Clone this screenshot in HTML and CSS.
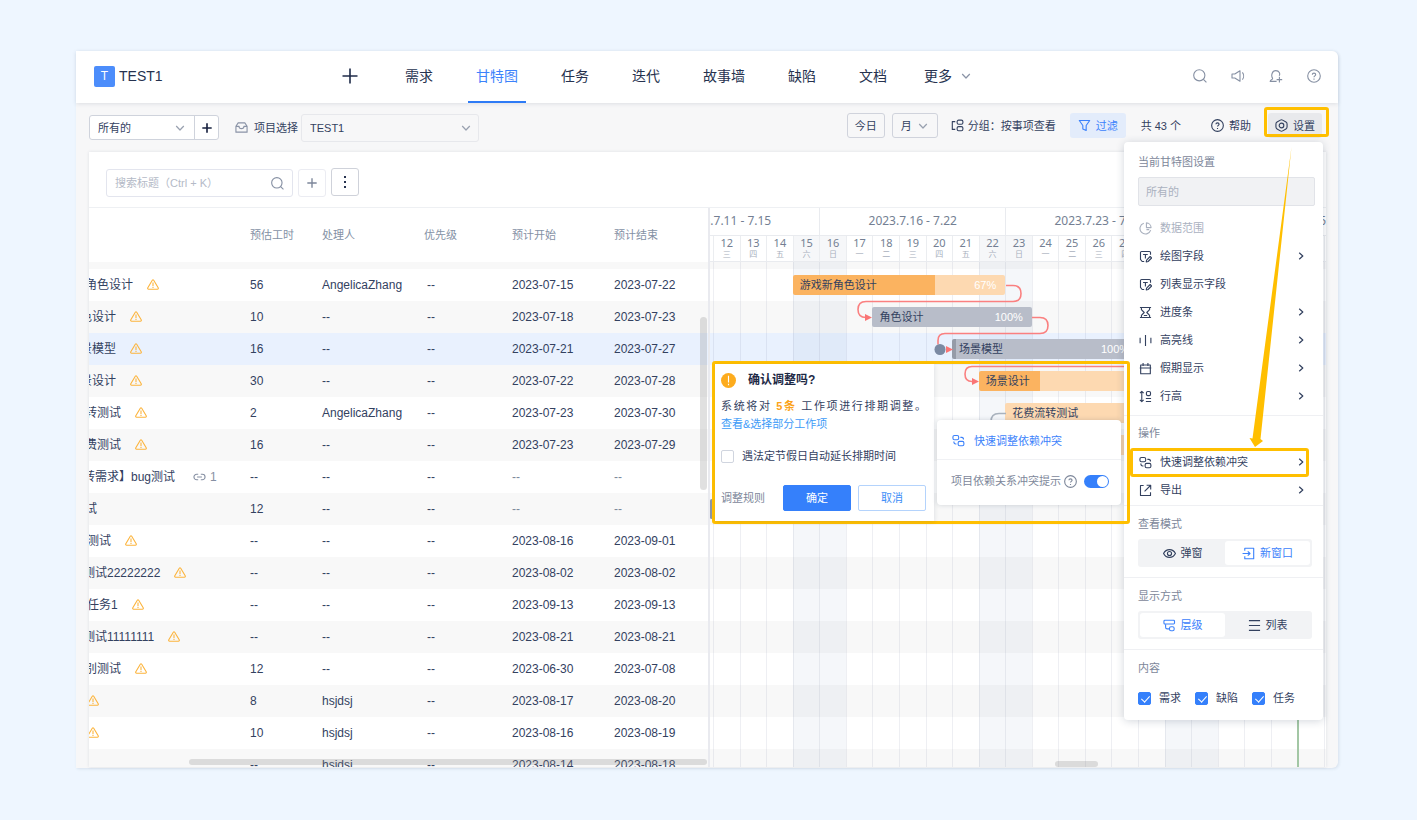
FILE: index.html
```html
<!DOCTYPE html>
<html lang="zh-CN">
<head>
<meta charset="utf-8">
<meta name="viewport" content="width=device-width, initial-scale=1">
<title>TEST1 - 甘特图</title>
<link rel="stylesheet" href="styles.css">
</head>
<body>
<svg class="sprite" aria-hidden="true">
  <symbol id="i-plus" viewBox="0 0 16 16"><path d="M8 0.5v15M0.5 8h15"/></symbol>
  <symbol id="i-down" viewBox="0 0 10 10"><path d="M1.2 3l3.8 4 3.8-4"/></symbol>
  <symbol id="i-right" viewBox="0 0 10 10"><path d="M3.2 1.8L6.8 5 3.2 8.2"/></symbol>
  <symbol id="i-search" viewBox="0 0 14 14"><circle cx="6.3" cy="6.3" r="5.6"/><path d="M10.4 10.4l3 3"/></symbol>
  <symbol id="i-sound" viewBox="0 0 14 14"><path d="M1 5h2.8l5.2-3.2v10.4L3.800 9H1zM11.400 3.400c1.600 2 1.600 5.200 0 7.200"/></symbol>
  <symbol id="i-bell" viewBox="0 0 14 14"><path d="M7.600 12.400H1.200c0-1.800 2.400-1.300 2.400-3C1.800 6.600 3 1.600 6.800 1.600c3.600 0 4.600 3.200 3.400 5.200M10.400 7.800v5.600M7.600 10.600h5.600"/></symbol>
  <symbol id="i-help" viewBox="0 0 14 14"><circle cx="7" cy="7" r="6.300"/><path d="M5.300 5.700c0-2.100 3.400-2.100 3.400 0 0 1.200-1.700 1.200-1.700 2.500M7 9.600v1.100"/></symbol>
  <symbol id="i-inbox" viewBox="0 0 14 14"><path d="M1 5.600L3.400 2h7.200L13 5.600V12H1zM1 5.800h3.400c0 3.200 5.200 3.200 5.200 0H13"/></symbol>
  <symbol id="i-group" viewBox="0 0 14 14"><path d="M4.600 2.800H1.400v8.400h3.200"/><rect x="6.600" y="1.200" width="6.200" height="4.400" rx="1.600"/><rect x="6.600" y="8.200" width="6.200" height="4.400" rx="1.600"/></symbol>
  <symbol id="i-funnel" viewBox="0 0 14 14"><path d="M1.400 1.600h11.200L8.800 7v5.400l-3.600-1.600V7z"/></symbol>
  <symbol id="i-nut" viewBox="0 0 14 14"><path d="M5.800 1.200q1.200-.7 2.400 0l3.600 2.100q1.200.7 1.200 2v3.400q0 1.300-1.200 2l-3.600 2.100q-1.200.7-2.400 0l-3.600-2.100Q1 10 1 8.700V5.300q0-1.300 1.200-2z"/><circle cx="7" cy="7" r="2.500"/></symbol>
  <symbol id="i-pie" viewBox="0 0 14 14"><path d="M5.200 1.400a5.900 5.900 0 1 0 7.400 7.400M8 1v5h5A5.200 5.200 0 0 0 8 1zM8 8.200h3"/></symbol>
  <symbol id="i-field" viewBox="0 0 14 14"><path d="M12.400 5.200V2.800q0-1.200-1.200-1.200H2.800q-1.200 0-1.200 1.200v7.400l1.800 2.200h2.200M4.400 4.800h5M6.900 4.800v4.400M7.800 12.800l.4-2 3.800-3.800 1.600 1.600-3.800 3.800z"/></symbol>
  <symbol id="i-glass" viewBox="0 0 14 14"><path d="M1 1.600h12M1 12.400h12M2.600 1.600v2.200L5.600 7l-3 3.200v2.200M11.400 1.600v2.200L8.400 7l3 3.200v2.200M5.200 10.200h3.600"/></symbol>
  <symbol id="i-bars" viewBox="0 0 14 14"><path d="M1.200 4v6M7 1.200v11.600M12.800 4v6"/></symbol>
  <symbol id="i-cal" viewBox="0 0 14 14"><path d="M1.800 6.400h10.400v6.200H1.800zM0.800 6.400h12.400M1.800 6.400V3.200h10.400v3.200M4.400 1v3.400M9.600 1v3.400"/></symbol>
  <symbol id="i-height" viewBox="0 0 14 14"><path d="M3 1.400v11.200M1 3.400l2-2 2 2M1 10.600l2 2 2-2M7.400 9.200h5.600M7.400 12.400h5.600"/><rect x="8" y="1.600" width="4.400" height="4.400" rx="1.400"/></symbol>
  <symbol id="i-link" viewBox="0 0 14 14"><rect x="1" y="1.600" width="6.200" height="4.600" rx="1.600"/><rect x="6.600" y="8" width="6.200" height="4.600" rx="1.600"/><path d="M9 3.600h1.600c1.400 0 1.800 0.800 1.800 2.400M2 8.200c0 1.600 0.400 2.600 2 2.600h0.800"/></symbol>
  <symbol id="i-export" viewBox="0 0 14 14"><path d="M5 1.600H1.600v10.800h10.800V9M6 8l6.400-6.400M8.200 1.400h4.400v4.400"/></symbol>
  <symbol id="i-eye" viewBox="0 0 14 14"><path d="M0.600 7C3.400 1.400 10.600 1.400 13.400 7 10.600 12.600 3.400 12.600 0.600 7z"/><circle cx="7" cy="7" r="2.200"/></symbol>
  <symbol id="i-enter" viewBox="0 0 14 14"><path d="M3 4V1.400h9.600v11.200H3V10M0.600 7h8M6.200 4.600L8.600 7 6.200 9.400"/></symbol>
  <symbol id="i-tree" viewBox="0 0 14 14"><rect x="1" y="1.400" width="11.400" height="4" rx="1"/><path d="M2.800 5.600v3.200c0 1.200 0.600 1.800 1.800 1.800h2"/><rect x="7" y="8.400" width="5" height="4.200" rx="1.600"/></symbol>
  <symbol id="i-list" viewBox="0 0 14 14"><path d="M1 1.800h12M1 7h12M1 12.200h12"/></symbol>
  <symbol id="i-warn" viewBox="0 0 12 11"><path d="M5.300 1.300q.7-1 1.400 0l4.500 7.500q.5 1.300-.8 1.400H1.600Q.3 10.100.8 8.800z"/><path d="M6 3.600v3.300M6 7.700v1.200"/></symbol>
  <symbol id="i-chain" viewBox="0 0 14 8"><path d="M5.600 1H4a3 3 0 0 0 0 6h1.600M8.400 1H10a3 3 0 0 1 0 6H8.400M4.400 4h5.200"/></symbol>
</svg>

<main class="window">
  <header class="top">
    <div class="brand"><span class="logo">T</span><span class="name">TEST1</span></div>
    <button class="plain add" aria-label="新建"><svg class="ic16"><use href="#i-plus"/></svg></button>
    <nav class="nav">
      <a href="#">需求</a><a href="#" class="active">甘特图</a><a href="#">任务</a><a href="#">迭代</a><a href="#">故事墙</a><a href="#">缺陷</a><a href="#">文档</a><a href="#" class="more">更多<svg class="ic10"><use href="#i-down"/></svg></a>
    </nav>
    <div class="tools">
      <button class="plain" aria-label="搜索"><svg class="ic14"><use href="#i-search"/></svg></button>
      <button class="plain" aria-label="公告"><svg class="ic14"><use href="#i-sound"/></svg></button>
      <button class="plain" aria-label="通知"><svg class="ic14"><use href="#i-bell"/></svg></button>
      <button class="plain" aria-label="帮助中心"><svg class="ic14"><use href="#i-help"/></svg></button>
    </div>
  </header>

  <div class="bar-row">
    <div class="view-pick">
      <span class="pick"><select aria-label="视图"><option>所有的</option></select><svg class="ic10"><use href="#i-down"/></svg></span>
      <button aria-label="新建视图"><svg class="ic10"><use href="#i-plus"/></svg></button>
    </div>
    <label class="proj-label" for="proj"><svg class="ic14"><use href="#i-inbox"/></svg>项目选择</label>
    <span class="pick proj"><select id="proj"><option>TEST1</option></select><svg class="ic10"><use href="#i-down"/></svg></span>
    <div class="actions">
      <button class="box">今日</button>
      <span class="pick month"><select aria-label="时间刻度"><option>月</option></select><svg class="ic10"><use href="#i-down"/></svg></span>
      <button class="plain group"><svg class="ic14"><use href="#i-group"/></svg>分组：按事项查看</button>
      <button class="plain filter"><svg class="ic14"><use href="#i-funnel"/></svg>过滤</button>
      <span class="count">共 43 个</span>
      <button class="plain help"><svg class="ic14"><use href="#i-help"/></svg>帮助</button>
      <span class="settings"><button class="plain"><svg class="ic14"><use href="#i-nut"/></svg>设置</button></span>
    </div>
  </div>

  <section class="panel">
    <div class="find">
      <span class="search"><input type="text" placeholder="搜索标题（Ctrl + K）" aria-label="搜索标题"><svg class="ic14"><use href="#i-search"/></svg></span>
      <button class="sq soft" aria-label="添加"><svg class="ic10"><use href="#i-plus"/></svg></button>
      <button class="sq raised" aria-label="更多操作"><i></i><i></i><i></i></button>
    </div>
    <div class="split">
      <div class="list">
        <table>
          <colgroup><col class="c-name"><col class="c-hour"><col class="c-user"><col class="c-prio"><col class="c-date"><col class="c-date"></colgroup>
          <thead>
            <tr><th></th><th>预估工时</th><th>处理人</th><th>优先级</th><th>预计开始</th><th>预计结束</th></tr>
          </thead>
          <tbody>
            <tr class="sliver"><td colspan="6"></td></tr>
            <tr><td><div class="cut4">角色设计<svg class="warn"><use href="#i-warn"/></svg></div></td><td>56</td><td>AngelicaZhang</td><td>--</td><td>2023-07-15</td><td>2023-07-22</td></tr>
            <tr><td><div class="cut9">色设计<svg class="warn"><use href="#i-warn"/></svg></div></td><td>10</td><td>--</td><td>--</td><td>2023-07-18</td><td>2023-07-23</td></tr>
            <tr class="on"><td><div class="cut9">景模型<svg class="warn"><use href="#i-warn"/></svg></div></td><td>16</td><td>--</td><td>--</td><td>2023-07-21</td><td>2023-07-27</td></tr>
            <tr><td><div class="cut9">景设计<svg class="warn"><use href="#i-warn"/></svg></div></td><td>30</td><td>--</td><td>--</td><td>2023-07-22</td><td>2023-07-28</td></tr>
            <tr><td><div class="cut4">转测试<svg class="warn"><use href="#i-warn"/></svg></div></td><td>2</td><td>AngelicaZhang</td><td>--</td><td>2023-07-23</td><td>2023-07-30</td></tr>
            <tr><td><div class="cut4">费测试<svg class="warn"><use href="#i-warn"/></svg></div></td><td>16</td><td>--</td><td>--</td><td>2023-07-23</td><td>2023-07-29</td></tr>
            <tr><td><div class="cut6">转需求】bug测试<span class="rel"><svg><use href="#i-chain"/></svg>1</span></div></td><td>--</td><td>--</td><td>--</td><td class="dim">--</td><td class="dim">--</td></tr>
            <tr><td><div class="cut4">试</div></td><td>12</td><td>--</td><td>--</td><td class="dim">--</td><td class="dim">--</td></tr>
            <tr><td><div class="cut2">测试<svg class="warn"><use href="#i-warn"/></svg></div></td><td>--</td><td>--</td><td>--</td><td>2023-08-16</td><td>2023-09-01</td></tr>
            <tr><td><div class="cut6">测试22222222<svg class="warn"><use href="#i-warn"/></svg></div></td><td>--</td><td>--</td><td>--</td><td>2023-08-02</td><td>2023-08-02</td></tr>
            <tr><td><div class="cut2">任务1<svg class="warn"><use href="#i-warn"/></svg></div></td><td>--</td><td>--</td><td>--</td><td>2023-09-13</td><td>2023-09-13</td></tr>
            <tr><td><div class="cut6">测试11111111<svg class="warn"><use href="#i-warn"/></svg></div></td><td>--</td><td>--</td><td>--</td><td>2023-08-21</td><td>2023-08-21</td></tr>
            <tr><td><div class="cut4">别测试<svg class="warn"><use href="#i-warn"/></svg></div></td><td>12</td><td>--</td><td>--</td><td>2023-06-30</td><td>2023-07-08</td></tr>
            <tr><td><div class="lone"><svg class="warn"><use href="#i-warn"/></svg></div></td><td>8</td><td>hsjdsj</td><td>--</td><td>2023-08-17</td><td>2023-08-20</td></tr>
            <tr><td><div class="lone"><svg class="warn"><use href="#i-warn"/></svg></div></td><td>10</td><td>hsjdsj</td><td>--</td><td>2023-08-16</td><td>2023-08-19</td></tr>
            <tr><td></td><td>--</td><td>hsjdsj</td><td>--</td><td>2023-08-14</td><td>2023-08-18</td></tr>
          </tbody>
        </table>
        <div class="thumb-v"></div>
        <div class="thumb-h"></div>
      </div>

      <div class="gantt">
        <div class="weeks days-grid">
          <div class="w1"><span>2023.7.11 - 7.15</span></div><div class="w2">2023.7.16 - 7.22</div><div class="w3">2023.7.23 - 7.29</div><div class="w4"><span>2023.7.30 - 8.5</span></div>
        </div>
        <div class="days days-grid">
          <div></div><div>12<small>三</small></div><div>13<small>四</small></div><div>14<small>五</small></div><div>15<small>六</small></div><div>16<small>日</small></div><div>17<small>一</small></div><div>18<small>二</small></div><div>19<small>三</small></div><div>20<small>四</small></div><div>21<small>五</small></div><div>22<small>六</small></div><div>23<small>日</small></div><div>24<small>一</small></div><div>25<small>二</small></div><div>26<small>三</small></div><div>27<small>四</small></div><div>28<small>五</small></div><div>29<small>六</small></div><div>30<small>日</small></div><div>31<small>一</small></div><div>1<small>二</small></div><div>2<small>三</small></div><div>3<small>四</small></div><div></div>
        </div>
        <div class="chart">
          <div class="line sliver"></div>
          <div class="line days-grid"><div class="task orange t1"><b>游戏新角色设计</b><em>67%</em></div></div>
          <div class="line days-grid"><div class="task gray t2"><b>角色设计</b><em>100%</em></div></div>
          <div class="line days-grid on"><div class="task gray edge t3"><b>场景模型</b><em>100%</em></div></div>
          <div class="line days-grid"><div class="task orange t4"><b>场景设计</b></div></div>
          <div class="line days-grid"><div class="task pale t5"><b>花费流转测试</b></div></div>
          <div class="line days-grid"><div class="task pale t6"></div></div>
          <div class="line"></div>
          <div class="line days-grid"><div class="task slate t8"></div></div>
          <div class="line"></div><div class="line"></div><div class="line"></div><div class="line"></div><div class="line"></div><div class="line"></div><div class="line"></div><div class="line"></div>
          <div class="cols days-grid">
            <i></i><i></i><i></i><i></i><i class="we"></i><i class="we"></i><i></i><i></i><i></i><i></i><i></i><i class="we"></i><i class="we"></i><i></i><i></i><i></i><i></i><i></i><i class="we"></i><i class="we"></i><i></i><i></i><i></i><i class="today"></i><i></i>
          </div>
          <svg class="wires" width="616" height="180" viewBox="0 0 616 180">
            <g fill="none" stroke="#fa8080" stroke-width="1.6">
              <path d="M296 23.500h7q8 0 8 8t-8 8H156q-8 0-8 8t8 8h2"/>
              <path d="M322 55.500h8q8 0 8 8t-8 8H235q-7 0-7 7v4"/>
              <path d="M236 87.500h4M420 104.500H262q-7 0-7 7.500t7 7.500h2"/>
            </g>
            <path fill="#fa7575" stroke="none" d="M155 52l7 3.500-7 3.500zM236 84l7 3.500-7 3.500zM262 116l7 3.500-7 3.500z"/>
            <path fill="none" stroke="#a9b2bd" stroke-width="1.600" d="M296 151.500h-7q-8 0-8 8"/>
            <circle cx="230" cy="87.500" r="5.500" fill="#7b8aa3" stroke="none"/>
          </svg>
        </div>
        <div class="thumb-g"></div>

        <div class="callout">
          <form class="confirm">
            <h2><svg viewBox="0 0 16 16"><circle cx="8" cy="8" r="8" fill="#fdac1e"/><path d="M8 3v7M8 11.500v1.500" stroke="#fff" stroke-width="1.200"/></svg>确认调整吗?</h2>
            <p>系统将对 <strong>5条</strong> 工作项进行排期调整。</p>
            <a href="#">查看&amp;选择部分工作项</a>
            <label class="tick"><input type="checkbox">遇法定节假日自动延长排期时间</label>
            <div class="foot"><a href="#">调整规则</a><button type="button" class="ok">确定</button><button type="button" class="cancel">取消</button></div>
          </form>
          <div class="submenu">
            <button class="plain"><svg class="ic14"><use href="#i-link"/></svg>快速调整依赖冲突</button>
            <label>项目依赖关系冲突提示<svg class="ic14"><use href="#i-help"/></svg><input type="checkbox" class="switch" checked></label>
          </div>
        </div>
      </div>
    </div>
  </section>

  <aside class="pop">
    <section>
      <h3>当前甘特图设置</h3>
      <select class="off" disabled aria-label="当前甘特图设置"><option>所有的</option></select>
      <div class="menu">
        <button class="plain item" disabled><svg class="ic14"><use href="#i-pie"/></svg>数据范围</button>
        <button class="plain item"><svg class="ic14"><use href="#i-field"/></svg>绘图字段<svg class="ic10"><use href="#i-right"/></svg></button>
        <button class="plain item"><svg class="ic14"><use href="#i-field"/></svg>列表显示字段</button>
        <button class="plain item"><svg class="ic14"><use href="#i-glass"/></svg>进度条<svg class="ic10"><use href="#i-right"/></svg></button>
        <button class="plain item"><svg class="ic14"><use href="#i-bars"/></svg>高亮线<svg class="ic10"><use href="#i-right"/></svg></button>
        <button class="plain item"><svg class="ic14"><use href="#i-cal"/></svg>假期显示<svg class="ic10"><use href="#i-right"/></svg></button>
        <button class="plain item"><svg class="ic14"><use href="#i-height"/></svg>行高<svg class="ic10"><use href="#i-right"/></svg></button>
      </div>
    </section>
    <section class="ops">
      <h3>操作</h3>
      <div class="menu">
        <button class="plain item marked"><svg class="ic14"><use href="#i-link"/></svg>快速调整依赖冲突<svg class="ic10"><use href="#i-right"/></svg></button>
        <button class="plain item"><svg class="ic14"><use href="#i-export"/></svg>导出<svg class="ic10"><use href="#i-right"/></svg></button>
      </div>
    </section>
    <section class="modes">
      <h3>查看模式</h3>
      <div class="seg"><button class="plain"><svg class="ic14"><use href="#i-eye"/></svg>弹窗</button><button class="plain cur"><svg class="ic14"><use href="#i-enter"/></svg>新窗口</button></div>
    </section>
    <section class="modes">
      <h3>显示方式</h3>
      <div class="seg"><button class="plain cur"><svg class="ic14"><use href="#i-tree"/></svg>层级</button><button class="plain"><svg class="ic14"><use href="#i-list"/></svg>列表</button></div>
    </section>
    <section class="kinds">
      <h3>内容</h3>
      <div class="checks"><label><input type="checkbox" checked>需求</label><label><input type="checkbox" checked>缺陷</label><label><input type="checkbox" checked>任务</label></div>
    </section>
  </aside>
  <svg class="pointer" width="44" height="300" viewBox="0 0 44 300"><path fill="#ffbf00" d="M43.500 0L12.500 292l2.500 2-8 6-5.500-9 3 .5z"/></svg>
</main>
</body>
</html>
```
FILE: styles.css
```css
* { box-sizing: border-box; }

body {
  margin: 0;
  height: 100vh;
  min-height: 640px;
  padding: 51px 79px 52px 76px;
  background: #eef6ff;
  color: #33415f;
  font: 11px/16px "Liberation Sans", "Noto Sans CJK SC", sans-serif;
}

button, input, select { font: inherit; color: inherit; }
button { padding: 0; cursor: pointer; }
a { color: inherit; text-decoration: none; }
h2, h3, p { margin: 0; font-weight: normal; }
i, em { font-style: normal; }

svg { flex: none; fill: none; stroke: currentColor; stroke-width: 1.2; stroke-linejoin: round; }
.sprite { position: absolute; width: 0; height: 0; }
.ic10 { width: 10px; height: 10px; }
.ic14 { width: 13px; height: 13px; }
.ic16 { width: 16px; height: 16px; }

.plain {
  display: flex;
  align-items: center;
  border: 0;
  background: none;
}

.window {
  position: relative;
  display: flex;
  flex-direction: column;
  height: 100%;
  background: #f7f7f8;
  border-radius: 0 6px 6px 0;
  box-shadow: 1px 1px 3px rgba(60, 80, 110, .12);
}

/* header */
.top {
  position: relative;
  display: flex;
  flex: none;
  align-items: center;
  height: 52px;
  padding: 0 17px 2px 18px;
  background: #fff;
  border-radius: 0 6px 0 0;
  box-shadow: 0 1px 4px rgba(30, 50, 80, .12);
}
.brand { display: flex; flex: 0 0 248px; align-items: center; gap: 4px; font-size: 14px; }
.brand .name { color: #26324f; }
.logo {
  width: 21px;
  height: 21px;
  border-radius: 2px;
  background: #4c8dfb;
  color: #fff;
  font-size: 12px;
  line-height: 21px;
  text-align: center;
}
.add { margin-right: 39px; color: #1f2b49; }
.add svg { stroke-width: 1.6; }
.nav { display: flex; align-self: stretch; gap: 27px; margin-bottom: -2px; font-size: 14px; color: #26324f; }
.nav a { display: flex; align-items: center; padding: 0 8px; border-bottom: 2px solid transparent; }
.nav .active { color: #3c82fb; border-color: #2e7bf6; }
.nav .more { gap: 9px; padding-left: 2px; }
.nav .more svg { color: #8a93a6; }
.tools { display: flex; gap: 24px; margin-left: auto; color: #8690a3; }
.tools svg { width: 14px; height: 14px; stroke-width: 1.1; }

/* toolbar */
.bar-row { display: flex; flex: none; align-items: center; height: 49px; padding: 0 16px 0 13px; }
.pick { position: relative; display: flex; align-items: center; }
.pick select { width: 100%; height: 100%; padding: 0 8px; border: 0; background: none; appearance: none; }
.pick svg { position: absolute; right: 9px; color: #98a0af; pointer-events: none; }
.view-pick { display: flex; height: 25px; border: 1px solid #cfd3dc; border-radius: 3px; background: #fff; }
.view-pick .pick { width: 104px; }
.view-pick button {
  display: flex;
  align-items: center;
  justify-content: center;
  width: 24px;
  border: 0;
  border-left: 1px solid #cfd3dc;
  background: none;
  color: #17213f;
}
.view-pick button svg { stroke-width: 2.6; }
.proj-label { display: flex; align-items: center; gap: 6px; margin: 0 3px 0 16px; }
.proj-label svg { color: #8a93a6; }
.proj { width: 178px; height: 28px; border: 1px solid #e7e8ec; border-radius: 3px; }
.proj svg { right: 7px; }
.actions { display: flex; align-items: center; height: 25px; margin: 0 0 4px auto; }
.actions .box, .month { height: 25px; border: 1px solid #d0d3dc; border-radius: 3px; background: none; }
.actions .box { width: 38px; margin-right: 7px; }
.month { width: 46px; margin-right: 13px; }
.group { gap: 4px; }
.filter {
  justify-content: center;
  gap: 5px;
  width: 56px;
  height: 25px;
  margin: 0 15px 0 14px;
  border-radius: 3px;
  background: #e3ecfb;
  color: #3c82fb;
}
.help { gap: 5px; margin: 0 17px 0 30px; }
.settings { position: relative; }
.settings button {
  justify-content: center;
  gap: 5px;
  width: 54px;
  height: 25px;
  border-radius: 3px;
  background: #e8e9ec;
}
.settings::after {
  content: "";
  position: absolute;
  inset: -6px -7px 1px -4px;
  border: 3px solid #ffbf00;
  border-radius: 3px;
}

/* panel */
.panel {
  display: flex;
  flex: 1;
  flex-direction: column;
  min-height: 0;
  margin: 0 12px 1px 13px;
  background: #fff;
  box-shadow: 0 0 3px rgba(30, 50, 80, .12);
}
.find { display: flex; flex: none; align-items: center; gap: 5px; height: 55px; padding: 7px 0 0 17px; }
.search { position: relative; display: flex; align-items: center; width: 187px; height: 28px; }
.search input { width: 100%; height: 100%; padding: 0 8px; border: 1px solid #e3e5ee; border-radius: 3px; background: none; }
.search input::placeholder { color: #b4bac7; }
.search svg { position: absolute; right: 9px; color: #8690a3; }
.sq { display: flex; flex-direction: column; align-items: center; justify-content: center; gap: 3px; width: 28px; height: 28px; border-radius: 3px; background: #fff; }
.soft { border: 1px solid #ebecf2; color: #7d879a; }
.soft svg { stroke-width: 2.2; }
.raised { border: 1px solid #cfd2da; margin-bottom: 2px; }
.raised i { width: 2px; height: 2px; background: #27324f; }

.split { display: flex; flex: 1; min-height: 0; border-top: 1px solid #eef0f3; }
.list { position: relative; flex: 0 0 621px; overflow: hidden; border-right: 2px solid #e9eaef; }
table { width: 100%; border-collapse: collapse; table-layout: fixed; font-size: 12px; }
.c-name { width: 161px; }
.c-hour { width: 72px; }
.c-user { width: 102px; }
.c-prio { width: 88px; }
.c-date { width: 102px; }
th { height: 54px; padding: 0; color: #8491a5; font-size: 11px; font-weight: normal; text-align: left; }
td { height: 32px; padding: 0; white-space: nowrap; }
td:nth-child(4) { padding-left: 3px; }
tr:nth-child(odd) td { background: #f8f8f8; }
tr.on td { background: #e9f1fe; }
thead tr th { background: #fff; }
.sliver td { height: 7px; }
td div { display: flex; align-items: center; }
td:first-child { overflow: hidden; }
.cut2 { margin-left: -2px; }
.cut4 { margin-left: -4px; }
.cut6 { margin-left: -6px; }
.cut9 { margin-left: -9px; }
.warn { width: 12px; height: 11px; margin: 0 0 2px 14px; color: #fcb43c; stroke-width: 1.1; }
.lone { margin-left: -16px; }
.rel { display: flex; align-items: center; gap: 4px; margin-left: 18px; color: #8690a3; }
.rel svg { width: 13px; height: 8px; }
.dim { color: #7d889b; }
.thumb-v, .thumb-h, .thumb-g { position: absolute; border-radius: 4px; background: rgba(130, 130, 130, .25); }
.thumb-v { top: 109px; right: 1px; width: 7px; height: 173px; }
.thumb-h { right: 1px; bottom: 2px; left: 100px; height: 6px; }
.thumb-g { bottom: 0; left: 56%; width: 43px; height: 6px; }

/* gantt */
.gantt { position: relative; display: flex; flex: 1; flex-direction: column; min-width: 0; }
.days-grid { display: grid; grid-template-columns: 3px repeat(23, minmax(0, 1fr)) 2px; }
.weeks { flex: none; height: 27px; color: #747f93; font: 12px/25px "Noto Sans", "Noto Sans CJK SC", sans-serif; text-align: center; white-space: nowrap; }
.weeks div { overflow: hidden; border-left: 1px solid #e9ebef; }
.weeks .w1 { display: flex; grid-column: 1 / 6; justify-content: flex-end; padding-right: 48px; border-left: 0; }
.w2 { grid-column: 6 / 13; }
.w3 { grid-column: 13 / 20; }
.weeks .w4 { display: flex; grid-column: 20 / 26; justify-content: flex-end; }
.days { flex: none; height: 27px; border-top: 1px solid #e9ebef; border-bottom: 1px solid #e9ebef; color: #747f93; font: 11px/13px "Noto Sans", "Noto Sans CJK SC", sans-serif; text-align: center; }
.days div { overflow: hidden; border-left: 1px solid #ebedf0; }
.days div:first-child { border: 0; }
.days small { display: block; color: #a9b0bd; font-size: 8px; line-height: 10px; }
.days div:nth-child(7n + 5), .days div:nth-child(7n + 6) { background: #f6f7f9; }
.chart { position: relative; flex: 1; min-height: 0; overflow: hidden; }
.line { height: 32px; align-items: center; }
.line:nth-child(odd) { background: #f8f8f8; }
.line.sliver { height: 7px; }
.line.on { background: #e9f1fe; }
.cols { position: absolute; inset: 0; }
.cols i { border-left: 1px solid rgba(120, 135, 160, .13); }
.cols i:first-child { border: 0; }
.cols .we { background: rgba(110, 140, 180, .07); }
.cols .today { border-left: 2px solid #a3c7a5; }
.wires { position: absolute; z-index: 2; top: 0; left: 0; }
.task { position: relative; z-index: 1; display: flex; justify-content: space-between; height: 20px; padding: 0 9px 0 7px; border-radius: 2px; line-height: 20px; white-space: nowrap; }
.task b { font-weight: normal; }
.task em { color: #fff; }
.orange { background: linear-gradient(to right, #fbb360 67%, #fdd9b1 67%); }
.gray { background: #b8bdc9; }
.edge { border-left: 4px solid #959ba8; padding-left: 3px; }
.pale { background: #fdd9b1; }
.slate { background: #8b95a7; }
.t1 { grid-column: 5 / 13; }
.t2 { grid-column: 8 / 14; }
.t3 { grid-column: 11 / 18; }
.t4 { grid-column: 12 / 19; background: linear-gradient(to right, #fbb360 33%, #fdd9b1 33%); }
.t5 { grid-column: 13 / 21; }
.t6 { grid-column: 13 / 20; }
.t8 { grid-column: 1; padding: 0; }

.callout {
  position: absolute;
  z-index: 5;
  top: 153px;
  left: 2px;
  display: flex;
  gap: 3px;
  align-items: flex-end;
  width: 418px;
  height: 163px;
  border: 3px solid #ffbf00;
  border-radius: 3px;
}
.confirm { display: flex; flex: none; flex-direction: column; align-items: flex-start; align-self: stretch; width: 219px; padding: 8px 8px 10px 6px; background: #fff; box-shadow: 1px 1px 4px rgba(30, 50, 80, .1); }
.confirm h2 { display: flex; align-items: center; gap: 12px; margin-bottom: 10px; color: #1d2945; font-size: 12px; font-weight: bold; }
.confirm h2 svg { width: 15px; height: 15px; stroke: none; }
.confirm p { width: 100%; margin-bottom: 2px; text-align-last: justify; }
.confirm strong { color: #fba31a; }
.confirm > a { color: #3d9bf7; }
.tick { display: flex; align-items: center; gap: 8px; margin-top: 16px; }
.foot { display: flex; align-items: center; width: 100%; margin-top: auto; gap: 7px; }
.foot a { margin-right: auto; color: #7d879a; }
.foot button { width: 68px; height: 26px; border: 1px solid #b4d3fc; border-radius: 2px; background: #fff; color: #3d8ef7; }
.foot .ok { border-color: #3580fb; background: #3580fb; color: #fff; }
.submenu { width: 184px; margin-bottom: 16px; border-radius: 4px; background: #fff; box-shadow: 0 0 5px rgba(30, 50, 80, .18); }
.submenu .plain { gap: 9px; width: 100%; height: 40px; padding: 2px 15px 0; border-bottom: 1px solid #f0f1f4; color: #3c82fb; }
.submenu label { display: flex; align-items: center; height: 45px; padding: 0 0 3px 14px; color: #7d879a; white-space: nowrap; }
.submenu label svg { margin: 0 7px 0 3px; }

input[type="checkbox"] { flex: none; width: 13px; height: 13px; margin: 0; border: 1px solid #d0d5df; border-radius: 2px; background: #fff; appearance: none; }
.checks input:checked { position: relative; border-color: #3580fb; background: #3580fb; }
.checks input:checked::after { content: ""; position: absolute; top: 1px; left: 4px; width: 4px; height: 7px; border: solid #fff; border-width: 0 1px 1px 0; transform: rotate(42deg); }
input.switch { display: flex; justify-content: flex-end; width: 25px; height: 13px; padding: 1px; border: 0; border-radius: 7px; background: #3580fb; }
.switch::after { content: ""; width: 11px; height: 11px; border-radius: 50%; background: #fff; }

/* settings popover */
.pop {
  position: absolute;
  z-index: 3;
  top: 91px;
  right: 15px;
  width: 199px;
  border-radius: 4px;
  background: #fff;
  box-shadow: 0 1px 8px rgba(30, 50, 80, .2);
}
.pop section { padding: 9px 8px 3px 14px; border-bottom: 1px solid #eff0f3; }
.pop section:first-child { padding-top: 12px; }
.pop section:last-child { border: 0; }
.pop h3 { margin-bottom: 7px; color: #7d879a; font-size: 11px; }
.off { display: block; width: 100%; height: 29px; padding: 0 7px; border: 1px solid #e1e3e8; border-radius: 2px; background: #f1f2f4; color: #aab1bf; opacity: 1; appearance: none; }
.menu { display: flex; flex-direction: column; }
.pop .off + .menu { margin: 8px 0 2px; }
.item { gap: 8px; height: 28px; padding: 0 9px 0 1px; text-align: left; }
.item:disabled { color: #aab1bf; }
.item .ic10 { margin-left: auto; }
.marked { position: relative; }
.marked::after { content: ""; position: absolute; inset: 0 6px -1px -8px; border: 3px solid #ffbf00; border-radius: 3px; }
.pop .ops { padding-bottom: 1px; }
.pop .modes { padding: 10px 11px 10px 14px; }
.seg { display: flex; height: 28px; padding: 2px; border-radius: 3px; background: #f2f3f5; }
.seg button { flex: 1; justify-content: center; gap: 5px; border-radius: 3px; }
.seg .cur { background: #fff; color: #3c82fb; flex-grow: 1; }
.pop .kinds { padding: 10px 14px 7px; }
.checks { display: flex; gap: 14px; height: 30px; align-items: center; }
.checks label { display: flex; align-items: center; gap: 8px; }

.pointer { position: absolute; z-index: 6; top: 96px; right: 46px; stroke: none; pointer-events: none; }
```
